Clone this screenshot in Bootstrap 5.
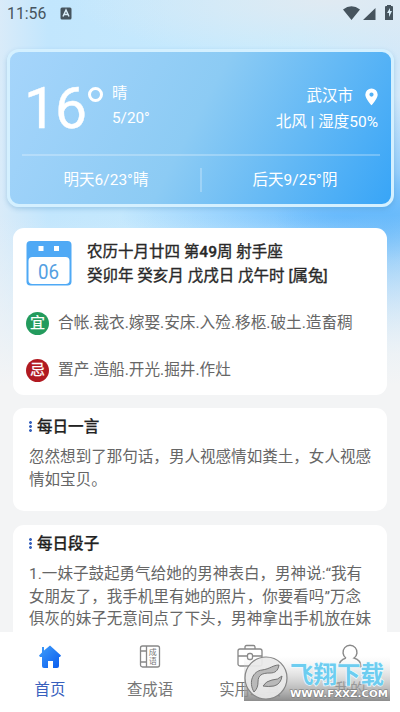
<!DOCTYPE html>
<html lang="zh-CN">
<head>
<meta charset="utf-8">
<meta name="viewport" content="width=device-width, initial-scale=1">
<title>万年历天气</title>
<link href="https://cdn.jsdelivr.net/npm/bootstrap@5.3.0/dist/css/bootstrap.min.css" rel="stylesheet">
<style>
body{font-family:Roboto,"Noto Sans CJK SC",sans-serif;font-size:15.55px;line-height:22.6px;color:#666;background:#f3f4f5}
.screen{width:400px;height:712px;background:
  linear-gradient(180deg,transparent 215px,#f3f4f5 385px),
  radial-gradient(ellipse 110px 130px at 385px 225px,#68bafb 0,#68bafb00 100%),
  radial-gradient(ellipse 230px 45px at 350px 217px,#64b8fd 0,#64b8fd00 100%),
  radial-gradient(ellipse 260px 60px at 330px 0,#e0eaf2 0,#e0eaf200 100%),
  linear-gradient(90deg,#d9ebf9 0,#c2e6fd 12%,#c8ecfe 75%,#d3e9f9 100%)}
.status{height:49px;padding:3px 6px 0 7px;color:#46545e;font-size:15.8px}
.status svg{display:block}
.badge-a{margin:4px 0 0 14px}
.weather{height:158px;margin:0 6px 0 7px;border:3px solid #d4f0ff;border-radius:12px;color:#fff;padding:0 11px 0 12px;
  background:linear-gradient(118deg,#a6d5fb 0,#8ccbf4 48%,#62b8f5 74%,#38a5f7 100%);box-shadow:0 2px 5px #4c91c055}
.now{height:104px;border-bottom:2px solid #ffffff40}
.temp{font-size:57px;line-height:60px;letter-spacing:-1px;margin:27px 0 0 2px;width:64px;-webkit-text-stroke:.4px #fff}
.ring{width:15px;height:15px;border:3.5px solid #fff;border-radius:50%;margin:35px 0 0 0}
.cond{margin:29px 0 0 9px;line-height:25px;font-size:15.3px}
.place{margin-top:32px;line-height:25.600px;font-size:15.5px;padding-right:2px}
.next{padding-top:12px}
.day{width:50%;font-size:15.5px;padding-top:1px}
.day:first-child{padding-right:10px}
.day:last-child{padding-left:8px}
.split{width:2px;height:24px;background:#ffffff40}
.panel{background:#fff;border-radius:11px;margin:0 13px}
.almanac{height:167px;margin-top:21px;padding:12px 13px 0}
.dark{color:#292929;-webkit-text-stroke:.35px #292929;font-size:15.5px;line-height:23.6px;margin-left:15px;padding-top:1px}
.dark b{font-weight:500}
.luck{font-size:15.65px;height:23px}
.luck + .luck{margin-top:24px}
.luck .lines{margin-left:9px}
.tag{width:23px;height:23px;border-radius:50%;color:#fff;font-size:15px;line-height:22px;-webkit-text-stroke:.25px #fff;text-align:center;flex:none}
.yi{background:#239b5d}.ji{background:#b11a21}
.lines{white-space:nowrap}
.heading{color:#222;font-weight:500;-webkit-text-stroke:.25px #222;height:22px;line-height:23px}
.dots{width:3px;height:11px;background:radial-gradient(circle at 1.5px 1.5px,#3862bd 1.2px,transparent 1.6px) 0 0/3px 4px;margin:0 5px 1px 0}
.quote{height:103px;margin-top:13px;padding:8px 0 0 16px}
.joke{height:107px;margin-top:14px;padding:8px 0 0 16px;border-radius:11px 11px 0 0}
.tabs{height:80px;background:#fff;font-size:15.4px;color:#777}
.tabs>div{width:100px;padding-top:11px;text-align:center}
.tabs svg{display:block;margin:0 auto 10px}
.on{color:#3860bd}
.stamp{left:244px;top:656px;width:146px;height:45px}
</style>
<script src="https://cdn.jsdelivr.net/npm/bootstrap@5.3.0/dist/js/bootstrap.bundle.min.js"></script>
</head>
<body>
<main class="screen position-relative overflow-hidden">
  <header class="status d-flex align-items-start">
    <span>11:56</span>
    <svg class="badge-a" width="12" height="13" viewBox="0 0 12 13"><rect x=".5" y=".5" width="11" height="12" rx="1.500" fill="#46545e"/><path d="M3 9.500 6 3l3 6.500M4 7.500h4" fill="none" stroke="#d9edf8" stroke-width="1.500"/></svg>
    <svg class="ms-auto" width="52" height="18" viewBox="0 0 52 18" fill="#46545e"><path d="M1 6.500Q9.500 0 18 6.500L9.500 17zM21 17 33.500 5v12zM43 4q0-1 1-1h1V2h4v1h1q1 0 1 1v13h-8z"/><path d="m48 5-3 5h2v4l3-6h-2z" fill="#d9edf8"/></svg>
  </header>

  <section class="weather">
    <div class="now d-flex">
      <div class="temp">16</div><div class="ring"></div>
      <div class="cond"><div>晴</div><div>5/20°</div></div>
      <div class="place ms-auto text-end text-nowrap">
        <div class="d-flex align-items-center justify-content-end">武汉市<svg class="ms-2" width="17" height="18" viewBox="0 0 17 18"><path fill="#fff" fill-rule="evenodd" d="M10.500 .5a6.200 6.200 0 0 0-6.200 6.200c0 4 6.200 10.500 6.200 10.500s6.200-6.500 6.200-10.500A6.200 6.200 0 0 0 10.500.5m0 4a2.100 2.100 0 1 1 0 4.200 2.100 2.100 0 0 1 0-4.200"/></svg></div>
        <div>北风 | 湿度50%</div>
      </div>
    </div>
    <div class="next d-flex align-items-center">
      <div class="day text-center">明天6/23°晴</div><div class="split"></div><div class="day text-center">后天9/25°阴</div>
    </div>
  </section>

  <section class="panel almanac">
    <div class="d-flex">
      <svg class="flex-shrink-0" width="46" height="46" viewBox="0 0 46 46"><rect x=".5" y="1" width="45" height="44.500" rx="4" fill="#4fa9f5"/><rect x="2.500" y="17" width="41" height="27" rx="4" fill="#fff"/><path fill="#fff" d="M12.500 6h5v5h-5zM28 6h5v5h-5z"/><text x="22.500" y="38.500" text-anchor="middle" font-size="19.500" textLength="21" lengthAdjust="spacingAndGlyphs" fill="#549fe2">06</text></svg>
      <div class="dark lines"><div>农历十月廿四 第<b>49</b>周 射手座</div><div>癸卯年 癸亥月 戊戌日 戊午时 [属兔]</div></div>
    </div>
    <div class="luck d-flex align-items-center mt-4"><span class="tag yi">宜</span><span class="lines">合帐.裁衣.嫁娶.安床.入殓.移柩.破土.造畜稠</span></div>
    <div class="luck d-flex align-items-center"><span class="tag ji">忌</span><span class="lines">置产.造船.开光.掘井.作灶</span></div>
  </section>

  <section class="panel quote">
    <div class="heading d-flex align-items-center"><i class="dots"></i>每日一言</div>
    <div class="lines mt-2">忽然想到了那句话，男人视感情如粪土，女人视感<br>情如宝贝。</div>
  </section>

  <section class="panel joke">
    <div class="heading d-flex align-items-center"><i class="dots"></i>每日段子</div>
    <div class="lines mt-2">1.一妹子鼓起勇气给她的男神表白，男神说:“我有<br>女朋友了，我手机里有她的照片，你要看吗”万念<br>俱灰的妹子无意间点了下头，男神拿出手机放在妹</div>
  </section>

  <nav class="tabs d-flex">
    <div class="on"><svg width="24" height="26" viewBox="0 0 24 26"><defs><linearGradient id="home" x1="0" y1="0" x2="1" y2="1"><stop stop-color="#42a0fa"/><stop offset="1" stop-color="#0759ee"/></linearGradient></defs><path fill="url(#home)" d="M4 4h2v3.500l6-5 11 10-1 1.500h-1V23q0 2-2 2h-4v-7h-5v7H6q-2 0-2-2v-9H2l-1-1.500L4 9.500z"/></svg>首页</div>
    <div><svg width="22" height="26" viewBox="0 0 22 26" fill="none" stroke="#888" stroke-width="1.300"><rect x="1.500" y="3" width="19" height="21" rx="2"/><path d="M7.500 3v21M1.500 8h6M1.500 19h6"/><text x="13.800" y="12" font-size="8" text-anchor="middle" fill="#777" stroke="none">成</text><text x="13.800" y="21" font-size="8" text-anchor="middle" fill="#777" stroke="none">语</text></svg>查成语</div>
    <div><svg width="26" height="26" viewBox="0 0 26 26" fill="none" stroke="#888" stroke-width="1.300"><rect x="1" y="6" width="24" height="17" rx="2"/><path d="M8 6V4q0-1.500 1.500-1.500h7Q18 2.500 18 4v2M1 13h9m6 0h9"/><rect x="10.500" y="10.500" width="5" height="6" rx="2"/></svg>实用工具</div>
    <div><svg width="26" height="26" viewBox="0 0 26 26" fill="none" stroke="#888" stroke-width="1.400"><path d="M9 15A7 7 0 1 1 17 15Q24 17 24 24H2Q2 17 9 15"/></svg>我的</div>
  </nav>

  <svg class="stamp position-absolute" viewBox="0 0 146 45">
    <defs><linearGradient id="shade" x1="0" y1="0" x2="0" y2="1"><stop stop-color="#ddd" stop-opacity="0"/><stop offset=".5" stop-color="#bbb" stop-opacity=".55"/><stop offset="1" stop-color="#808080" stop-opacity=".9"/></linearGradient></defs>
    <path fill="url(#shade)" d="M0 0h146v45H0z"/>
    <circle cx="22" cy="22" r="21" fill="#e9e9e9" fill-opacity=".93" stroke="#858585" stroke-width="1.200"/>
    <path d="M10 36C4 26 9 15 18 14c8-1 11-5 17-5-1 6-4 8-9 8-8 0-12 2-12 9 0 4-1 7-4 10M19 30q3-5 9-6 6 0 10-4-1 8-8 10-6 1-11 0" fill="#b9b9b9" stroke="#747474"/>
    <text x="46" y="26.500" font-size="23.500" font-weight="700" textLength="94" lengthAdjust="spacingAndGlyphs" fill="#6dcdf0" stroke="#edfaff" stroke-width="1.500" paint-order="stroke">飞翔下载</text>
    <text x="46" y="41" font-family="DejaVu Sans" font-size="9.500" font-weight="700" textLength="98" lengthAdjust="spacingAndGlyphs" fill="#fff" stroke="#777" stroke-width="1" paint-order="stroke">WWW.FXXZ.COM</text>
  </svg>
</main>
</body>
</html>
